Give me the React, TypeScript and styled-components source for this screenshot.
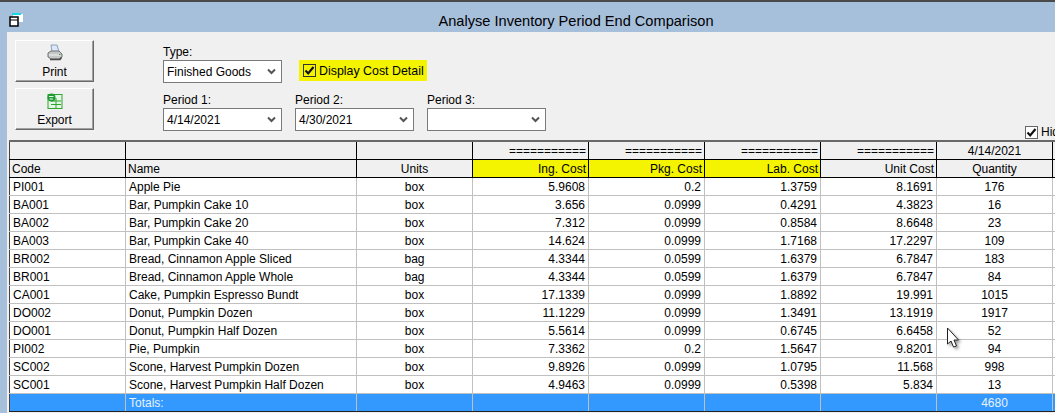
import React from 'react';
import styled, { createGlobalStyle } from 'styled-components';

const GlobalStyle = createGlobalStyle`
  html, body {
    margin: 0;
    padding: 0;
    width: 1055px;
    height: 413px;
    overflow: hidden;
    background: #a6bfdb;
    font-family: "Liberation Sans", Arial, sans-serif;
    font-size: 12px;
    color: #000;
  }
`;

const Window = styled.div`
  position: relative;
  width: 1055px;
  height: 413px;
  overflow: hidden;
  background: #a6bfdb;
  border-top: 2px solid #4a4a4a;
  box-sizing: border-box;
`;

const TitleBar = styled.div`
  display: flex;
  align-items: center;
  justify-content: center;
  height: 30px;
  padding: 7px 0 0 97px;
  box-sizing: border-box;
  font-size: 14.6px;
  position: relative;
`;

const AppIcon = styled.svg`
  position: absolute;
  left: 9px;
  top: 11px;
`;

const Body = styled.div`
  margin-left: 7px;
  height: 381px;
  width: 1048px;
  background: #f0f0f0;
  display: flex;
  flex-direction: column;
`;

const Toolbar = styled.div`
  display: flex;
  height: 108px;
  padding: 8px 0 0 8px;
  box-sizing: border-box;
`;

const ButtonColumn = styled.div`
  display: flex;
  flex-direction: column;
  gap: 6px;
  width: 79px;
`;

const ToolButton = styled.button`
  width: 79px;
  height: 42px;
  padding: 3px 0 0;
  box-sizing: border-box;
  display: flex;
  flex-direction: column;
  align-items: center;
  gap: 3px;
  background: #f0f0f0;
  border: 1px solid;
  border-color: #fff #696969 #696969 #fff;
  box-shadow: inset -1px -1px 0 #a0a0a0;
  font: 12px "Liberation Sans", Arial, sans-serif;
  color: #000;
`;

const IconSlot = styled.span`
  height: 18px;
  display: flex;
  align-items: center;
`;

const Filters = styled.div`
  margin-left: 69px;
  display: flex;
  flex-direction: column;
  gap: 8px;
  padding-top: 3px;
`;

const FilterRow = styled.div`
  display: flex;
  gap: 13px;
  align-items: flex-end;
`;

const Field = styled.div`
  display: flex;
  flex-direction: column;
  width: 119px;
`;

const FieldLabel = styled.div`
  height: 17px;
  line-height: 19px;
`;

const SelectBox = styled.div`
  height: 23px;
  box-sizing: border-box;
  background: #fff;
  border: 1px solid #7a7a7a;
  display: flex;
  align-items: center;
  justify-content: space-between;
  padding: 0 5px 0 3px;
`;

const DisplayCost = styled.label`
  display: flex;
  align-items: center;
  gap: 3px;
  width: 128px;
  height: 21px;
  margin: 0 0 2px 4px;
  padding-left: 4px;
  box-sizing: border-box;
  background: #f4f400;
  font-size: 12.4px;
  white-space: nowrap;
`;

const CheckBox = styled.span<{ $plain?: boolean }>`
  width: 13px;
  height: 13px;
  box-sizing: border-box;
  flex: none;
  border: 1px solid ${(p) => (p.$plain ? '#666' : '#333')};
  background: ${(p) => (p.$plain ? '#fff' : 'transparent')};
  display: flex;
  align-items: center;
  justify-content: center;
`;

const HideToggle = styled.label`
  margin-left: auto;
  align-self: flex-end;
  width: 30px;
  overflow: hidden;
  white-space: nowrap;
  display: flex;
  align-items: center;
  gap: 3px;
  margin-bottom: 1px;
`;

const GridTable = styled.table`
  table-layout: fixed;
  border-collapse: collapse;
  width: 1160px;
  margin-left: 2px;
  border-top: 2px solid #696969;
  font-size: 12px;
`;

const HeadCell = styled.th<{ $align?: string; $highlight?: boolean }>`
  height: 17px;
  padding: 0 2px;
  border: 1px solid #000;
  background: ${(p) => (p.$highlight ? '#f4f400' : '#f0f0f0')};
  font-weight: normal;
  text-align: ${(p) => p.$align || 'center'};
  white-space: nowrap;
  overflow: hidden;
  &:first-child {
    border-left-color: #444;
  }
`;

const Cell = styled.td<{ $align?: string }>`
  height: 17px;
  padding: 0 3px;
  border: 1px solid #c0c0c0;
  background: #fff;
  text-align: ${(p) => p.$align || 'left'};
  white-space: nowrap;
  overflow: hidden;
  &:first-child {
    border-left-color: #444;
  }
`;

const TotalCell = styled(Cell)`
  background: #3399ff;
  color: #e8f2ff;
  border-bottom-color: #222;
`;

const Cursor = styled.svg`
  position: absolute;
  left: 946px;
  top: 325px;
  filter: drop-shadow(2px 2px 1.5px rgba(0, 0, 0, 0.4));
`;

const Chevron = () => (
  <svg width="9" height="7" viewBox="0 0 9 7">
    <path d="M1 1.5 L4.5 5 L8 1.5" fill="none" stroke="#555" strokeWidth="2" />
  </svg>
);

const Tick = () => (
  <svg width="11" height="11" viewBox="0 0 11 11">
    <path d="M1.5 5.5 L4.2 8.4 L9.5 2" fill="none" stroke="#111" strokeWidth="2.2" />
  </svg>
);

const PrinterIcon = () => (
  <svg width="16" height="18" viewBox="0 0 16 18">
    <path d="M4 1 H10 L12 8 H5 Z" fill="#dbe8fb" stroke="#8fa0b8" />
    <path d="M1 9 L4 7 H12 L15 10 V13 L12 15 H4 L1 13 Z" fill="#c4c6c8" stroke="#707070" />
    <path d="M2 11 H14" stroke="#f2f2f2" />
    <path d="M3 15.5 H13 L14.5 13.5" fill="none" stroke="#4a4a4a" strokeWidth="1.5" />
    <rect x="12" y="10" width="1.5" height="1" fill="#3a9a4a" />
  </svg>
);

const ExportIcon = () => (
  <svg width="16" height="16" viewBox="0 0 16 16">
    <rect x="1" y="1.5" width="14" height="14" fill="#e6f6e6" stroke="#2fa52f" />
    <path d="M4 8 H14 M4 11.5 H14 M9 5 V15" stroke="#2fa52f" />
    <circle cx="4.5" cy="4.5" r="4" fill="#1f9a35" />
    <path d="M2 3.5 H6.5 M2.5 6 H6" stroke="#e8ffe8" />
  </svg>
);

type Row = [string, string, string, string, string, string, string, string];

const rows: Row[] = [
  ['PI001', 'Apple Pie', 'box', '5.9608', '0.2', '1.3759', '8.1691', '176'],
  ['BA001', 'Bar, Pumpkin Cake 10', 'box', '3.656', '0.0999', '0.4291', '4.3823', '16'],
  ['BA002', 'Bar, Pumpkin Cake 20', 'box', '7.312', '0.0999', '0.8584', '8.6648', '23'],
  ['BA003', 'Bar, Pumpkin Cake 40', 'box', '14.624', '0.0999', '1.7168', '17.2297', '109'],
  ['BR002', 'Bread, Cinnamon Apple Sliced', 'bag', '4.3344', '0.0599', '1.6379', '6.7847', '183'],
  ['BR001', 'Bread, Cinnamon Apple Whole', 'bag', '4.3344', '0.0599', '1.6379', '6.7847', '84'],
  ['CA001', 'Cake, Pumpkin Espresso Bundt', 'box', '17.1339', '0.0999', '1.8892', '19.991', '1015'],
  ['DO002', 'Donut, Pumpkin Dozen', 'box', '11.1229', '0.0999', '1.3491', '13.1919', '1917'],
  ['DO001', 'Donut, Pumpkin Half Dozen', 'box', '5.5614', '0.0999', '0.6745', '6.6458', '52'],
  ['PI002', 'Pie, Pumpkin', 'box', '7.3362', '0.2', '1.5647', '9.8201', '94'],
  ['SC002', 'Scone, Harvest Pumpkin Dozen', 'box', '9.8926', '0.0999', '1.0795', '11.568', '998'],
  ['SC001', 'Scone, Harvest Pumpkin Half Dozen', 'box', '4.9463', '0.0999', '0.5398', '5.834', '13'],
];

const columnWidths = [116, 231, 116, 116, 116, 116, 116, 116, 116];
const rule = '===========';

const App: React.FC = () => (
  <Window>
    <GlobalStyle />
    <TitleBar>
      <AppIcon width="16" height="14" viewBox="0 0 16 14">
        <rect x="4" y="1" width="10" height="8" fill="#fff" />
        <path d="M3 1 H12" stroke="#18d8e8" strokeWidth="2" />
        <rect x="1" y="4" width="8" height="9" fill="#fff" stroke="#000" strokeWidth="1.5" />
        <path d="M1 7 H9" stroke="#000" />
      </AppIcon>
      Analyse Inventory Period End Comparison
    </TitleBar>
    <Body>
      <Toolbar>
        <ButtonColumn>
          <ToolButton>
            <IconSlot>
              <PrinterIcon />
            </IconSlot>
            Print
          </ToolButton>
          <ToolButton>
            <IconSlot>
              <ExportIcon />
            </IconSlot>
            Export
          </ToolButton>
        </ButtonColumn>
        <Filters>
          <FilterRow>
            <Field>
              <FieldLabel>Type:</FieldLabel>
              <SelectBox>
                Finished Goods
                <Chevron />
              </SelectBox>
            </Field>
            <DisplayCost>
              <CheckBox>
                <Tick />
              </CheckBox>
              Display Cost Detail
            </DisplayCost>
          </FilterRow>
          <FilterRow>
            <Field>
              <FieldLabel>Period 1:</FieldLabel>
              <SelectBox>
                4/14/2021
                <Chevron />
              </SelectBox>
            </Field>
            <Field>
              <FieldLabel>Period 2:</FieldLabel>
              <SelectBox>
                4/30/2021
                <Chevron />
              </SelectBox>
            </Field>
            <Field>
              <FieldLabel>Period 3:</FieldLabel>
              <SelectBox>
                &nbsp;
                <Chevron />
              </SelectBox>
            </Field>
          </FilterRow>
        </Filters>
        <HideToggle>
          <CheckBox $plain>
            <Tick />
          </CheckBox>
          Hide
        </HideToggle>
      </Toolbar>
      <GridTable>
        <colgroup>
          {columnWidths.map((w, i) => (
            <col key={i} style={{ width: w }} />
          ))}
        </colgroup>
        <thead>
          <tr>
            <HeadCell />
            <HeadCell />
            <HeadCell />
            <HeadCell $align="right">{rule}</HeadCell>
            <HeadCell $align="right">{rule}</HeadCell>
            <HeadCell $align="right">{rule}</HeadCell>
            <HeadCell $align="right">{rule}</HeadCell>
            <HeadCell>4/14/2021</HeadCell>
            <HeadCell />
          </tr>
          <tr>
            <HeadCell $align="left">Code</HeadCell>
            <HeadCell $align="left">Name</HeadCell>
            <HeadCell>Units</HeadCell>
            <HeadCell $align="right" $highlight>Ing. Cost</HeadCell>
            <HeadCell $align="right" $highlight>Pkg. Cost</HeadCell>
            <HeadCell $align="right" $highlight>Lab. Cost</HeadCell>
            <HeadCell $align="right">Unit Cost</HeadCell>
            <HeadCell>Quantity</HeadCell>
            <HeadCell />
          </tr>
        </thead>
        <tbody>
          {rows.map((r) => (
            <tr key={r[0]}>
              <Cell>{r[0]}</Cell>
              <Cell>{r[1]}</Cell>
              <Cell $align="center">{r[2]}</Cell>
              <Cell $align="right">{r[3]}</Cell>
              <Cell $align="right">{r[4]}</Cell>
              <Cell $align="right">{r[5]}</Cell>
              <Cell $align="right">{r[6]}</Cell>
              <Cell $align="center">{r[7]}</Cell>
              <Cell />
            </tr>
          ))}
          <tr>
            <TotalCell />
            <TotalCell>Totals:</TotalCell>
            <TotalCell />
            <TotalCell />
            <TotalCell />
            <TotalCell />
            <TotalCell />
            <TotalCell $align="center">4680</TotalCell>
            <TotalCell />
          </tr>
        </tbody>
      </GridTable>
    </Body>
    <Cursor width="16" height="22" viewBox="0 0 16 22">
      <path d="M1.5 1 V17 L5 14 L7.5 20 L10.5 19 L8 13 H12.5 Z" fill="#fff" stroke="#222" />
    </Cursor>
  </Window>
);

export default App;
